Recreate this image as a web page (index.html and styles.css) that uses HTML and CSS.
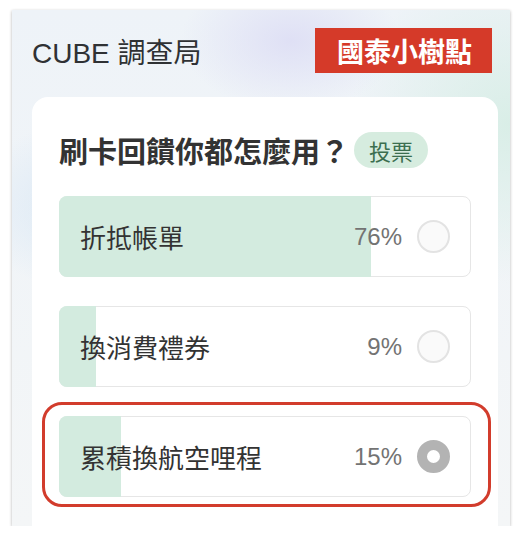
FILE: index.html
```html
<!doctype html>
<html>
<head>
<meta charset="utf-8">
<title>CUBE 調查局</title>
<link rel="stylesheet" href="styles.css">
</head>
<body>
    <div class="survey">
        <div class="survey-head">
            <h2>CUBE 調查局</h2>
            <div class="badge">國泰小樹點</div>
        </div>
        <div class="panel">
            <div class="question">
                <h3>刷卡回饋你都怎麼用？</h3>
                <span class="tag">投票</span>
            </div>
            <div class="option">
                <div class="fill" style="width: 76%"></div>
                <span class="label">折抵帳單</span>
                <span class="pct">76%</span>
                <span class="radio"></span>
            </div>
            <div class="option">
                <div class="fill" style="width: 9%"></div>
                <span class="label">換消費禮券</span>
                <span class="pct">9%</span>
                <span class="radio"></span>
            </div>
            <div class="option picked">
                <div class="fill" style="width: 15%"></div>
                <span class="label">累積換航空哩程</span>
                <span class="pct">15%</span>
                <span class="radio"></span>
            </div>
        </div>
    </div>
</body>
</html>
```

FILE: styles.css
```css
*{
    padding: 0px;
    margin: 0px;
    box-sizing: border-box;
}
body{
    background-color: white;
    font-family: "Liberation Sans", "Noto Sans CJK TC", sans-serif;
    color: #333;
}
.survey{
    margin: 10px 12px 0px;
    width: 498px;
    height: 516px;
    overflow: hidden;
    padding: 18px 12px 2px 20px;
    display: flex;
    flex-direction: column;
    box-shadow: 0px 1px 3px rgba(0,0,0,0.3);
    background:
        radial-gradient(ellipse 160px 90px at 22% 38%, #d5e5f4 0%, rgba(213,229,244,0) 100%),
        radial-gradient(ellipse 110px 70px at 56% 6%, #dfe0f5 0%, rgba(223,224,245,0) 100%),
        radial-gradient(ellipse 160px 160px at 100% 22%, #d9eee7 0%, rgba(217,238,231,0) 100%),
        linear-gradient(180deg, #eef3f8 0%, #f4f6f7 100%);
}
.survey-head{
    display: flex;
    align-items: center;
    justify-content: space-between;
    height: 45px;
    margin-right: 6px;
}
.survey-head h2{
    font-size: 28px;
    font-weight: normal;
    color: #2f3134;
}
.badge{
    height: 45px;
    line-height: 45px;
    padding: 0px 20px 0px 22px;
    background-color: #d53a29;
    color: white;
    font-size: 27px;
    font-weight: bold;
    font-family: "Noto Sans CJK TC", sans-serif;
}
.panel{
    flex: 1;
    margin-top: 24px;
    background-color: white;
    border-radius: 16px 16px 0px 0px;
    padding: 35px 27px 0px;
}
.question{
    display: flex;
    align-items: center;
    height: 36px;
    margin-bottom: 28px;
}
.question h3{
    font-size: 29px;
    font-weight: bold;
    color: #333;
    font-family: "Noto Sans CJK TC", sans-serif;
}
.tag{
    margin-left: 5px;
    height: 36px;
    line-height: 36px;
    padding: 0px 15px;
    border-radius: 18px;
    background-color: #d6ecdf;
    color: #3b6e4f;
    font-size: 22px;
    font-family: "Noto Sans CJK TC", sans-serif;
}
.option{
    position: relative;
    display: flex;
    align-items: center;
    height: 81px;
    margin-bottom: 29px;
    padding: 0px 20px 0px 20px;
    border: 1px solid #e6e6e6;
    border-radius: 8px;
}
.fill{
    position: absolute;
    top: -1px;
    bottom: -1px;
    left: -1px;
    background-color: #d3ebdf;
    border-radius: 8px 0px 0px 8px;
}
.label{
    position: relative;
    flex: 1;
    font-size: 26px;
    color: #333;
    font-family: "Noto Sans CJK TC", sans-serif;
}
.pct{
    position: relative;
    font-size: 24px;
    color: #737373;
    margin-right: 15px;
}
.radio{
    position: relative;
    width: 33px;
    height: 33px;
    border-radius: 50%;
    border: 2px solid #e3e3e3;
    background-color: #fafafa;
}
.picked::after{
    content: "";
    position: absolute;
    top: -15px;
    left: -18px;
    right: -21px;
    bottom: -11px;
    border: 3px solid #d23c2c;
    border-radius: 20px;
}
.picked .radio{
    border: 10px solid #b3b3b3;
    background-color: white;
}
```
